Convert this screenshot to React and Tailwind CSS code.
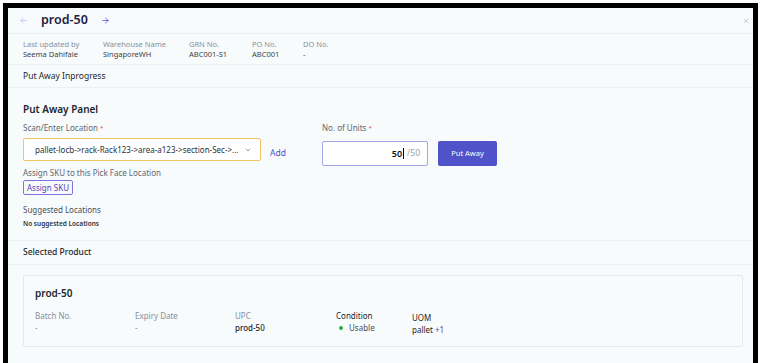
import { ChevronDown, ArrowLeft, ArrowRight, X } from "lucide-react";

const meta = [
  { label: "Last updated by", value: "Seema Dahifale", w: "w-[80px]" },
  { label: "Warehouse Name", value: "SingaporeWH", w: "w-[86px]" },
  { label: "GRN No.", value: "ABC001-S1", w: "w-[63px]" },
  { label: "PO No.", value: "ABC001", w: "w-[51px]" },
  { label: "DO No.", value: "-", w: "w-[60px]" },
];

const App = () => {
  return (
    <div className="w-[762px] h-[363px] bg-white pt-[3px] pl-[3px] overflow-hidden" style={{ fontFamily: '"Noto Sans", "Open Sans", sans-serif' }}>
      <div className="w-[755px] h-[366px] border-[5px] border-black bg-[#f7fbfc] flex flex-col">
        {/* Header */}
        <div className="h-[26px] flex items-center pl-[11px] pr-[3px] border-b border-[#e9eff3]">
          <ArrowLeft className="w-[9px] h-[9px] text-[#a89ff0]" strokeWidth={1.5} />
          <span className="ml-[13px] text-[12.5px] font-semibold text-[#1d2040] leading-none">prod-50</span>
          <ArrowRight className="ml-[13px] w-[9px] h-[9px] text-[#5440e0]" strokeWidth={2} />
          <X className="ml-auto w-[8px] h-[8px] text-[#9aa0a8]" strokeWidth={1.5} />
        </div>

        {/* Meta */}
        <div className="h-[31px] flex items-center pl-[15px] border-b border-[#e9eff3]">
          {meta.map((m) => (
            <div key={m.label} className={`${m.w} flex flex-col text-[7.5px] leading-[10px]`}>
              <span className="text-[#8a909b]">{m.label}</span>
              <span className="text-[#3a3f4a]">{m.value}</span>
            </div>
          ))}
        </div>

        {/* Status */}
        <div className="h-[23px] flex items-center pl-[15px] border-b border-[#e9eff3] text-[8.5px] text-[#22262e]">
          Put Away Inprogress
        </div>

        {/* Panel */}
        <div className="h-[153px] pl-[15px] pt-[14px] border-b border-[#e9eff3]">
          <div className="text-[10px] leading-[15px] font-semibold text-[#22262e]">Put Away Panel</div>
          <div className="flex mt-[5px]">
            <div className="w-[299px]">
              <div className="text-[8px] leading-[12px] text-[#5f6570]">
                Scan/Enter Location <span className="text-[6px] align-top text-[#e0474c]">*</span>
              </div>
              <div className="flex items-end mt-[4px]">
                <div className="w-[238px] h-[23px] rounded-[2px] border border-[#f5c462] bg-white flex items-center pl-[11px] pr-[8px]">
                  <span className="text-[8px] text-[#2b2f3a] truncate">pallet-locb-&gt;rack-Rack123-&gt;area-a123-&gt;section-Sec-&gt;...</span>
                  <ChevronDown className="ml-auto w-[8px] h-[8px] text-[#6b7280]" strokeWidth={2} />
                </div>
                <span className="ml-[9px] mb-[1px] text-[8.5px] text-[#4d4fc8]">Add</span>
              </div>
              <div className="mt-[6px] text-[8px] leading-[12px] text-[#5f6570]">Assign SKU to this Pick Face Location</div>
              <div className="w-fit mt-[1px] h-[15px] px-[3px] rounded-[2px] border border-[#8a6fe0] text-[8px] leading-[13px] text-[#5a3fc0]">
                Assign SKU
              </div>
              <div className="mt-[9px] text-[8px] leading-[11px] text-[#4a4f59]">Suggested Locations</div>
              <div className="mt-[4px] text-[6.5px] leading-[9px] font-semibold text-[#2b2f3a]">No suggested Locations</div>
            </div>
            <div>
              <div className="text-[8px] leading-[12px] text-[#5f6570]">
                No. of Units <span className="text-[6px] align-top text-[#e0474c]">*</span>
              </div>
              <div className="flex mt-[7px]">
                <div className="w-[106px] h-[25px] rounded-[2px] border border-[#a6a4ec] bg-white flex items-center justify-end pr-[7px]">
                  <span className="text-[9px] font-semibold text-[#111]">50</span>
                  <span className="w-[1px] h-[11px] bg-black ml-[1px]"></span>
                  <span className="ml-[3px] text-[8.5px] text-[#9aa0a8]">/50</span>
                </div>
                <div className="ml-[10px] w-[59px] h-[25px] rounded-[2px] bg-[#4f52c8] flex items-center justify-center text-[7.5px] text-white">
                  Put Away
                </div>
              </div>
            </div>
          </div>
        </div>

        {/* Selected product */}
        <div className="h-[24px] flex items-center pl-[15px] border-b border-[#e9eff3] text-[8.5px] font-medium text-[#22262e]">
          Selected Product
        </div>
        <div className="pl-[15px] pt-[10px]">
          <div className="w-[720px] h-[72px] border border-[#e3e8ec] rounded-[2px] pl-[11px] pt-[10px]">
            <div className="text-[10px] leading-[15px] font-semibold text-[#22262e]">prod-50</div>
            <div className="flex mt-[9px] text-[8px] leading-[12px]">
              <div className="w-[100px] flex flex-col">
                <span className="text-[#8a909b]">Batch No.</span>
                <span className="text-[#8a909b]">-</span>
              </div>
              <div className="w-[100px] flex flex-col">
                <span className="text-[#8a909b]">Expiry Date</span>
                <span className="text-[#8a909b]">-</span>
              </div>
              <div className="w-[101px] flex flex-col">
                <span className="text-[#8a909b]">UPC</span>
                <span className="text-[#22262e] font-medium">prod-50</span>
              </div>
              <div className="w-[76px] flex flex-col">
                <span className="text-[#22262e]">Condition</span>
                <span className="text-[#4a4f59] flex items-center">
                  <span className="ml-[3px] w-[4px] h-[4px] rounded-full bg-[#2faa3f]"></span>
                  <span className="ml-[6px]">Usable</span>
                </span>
              </div>
              <div className="flex flex-col pt-[2px]">
                <span className="text-[#22262e]">UOM</span>
                <span className="text-[#22262e]">pallet <span className="text-[#5a3fc0]">+1</span></span>
              </div>
            </div>
          </div>
        </div>
      </div>
    </div>
  );
};

export default App;
